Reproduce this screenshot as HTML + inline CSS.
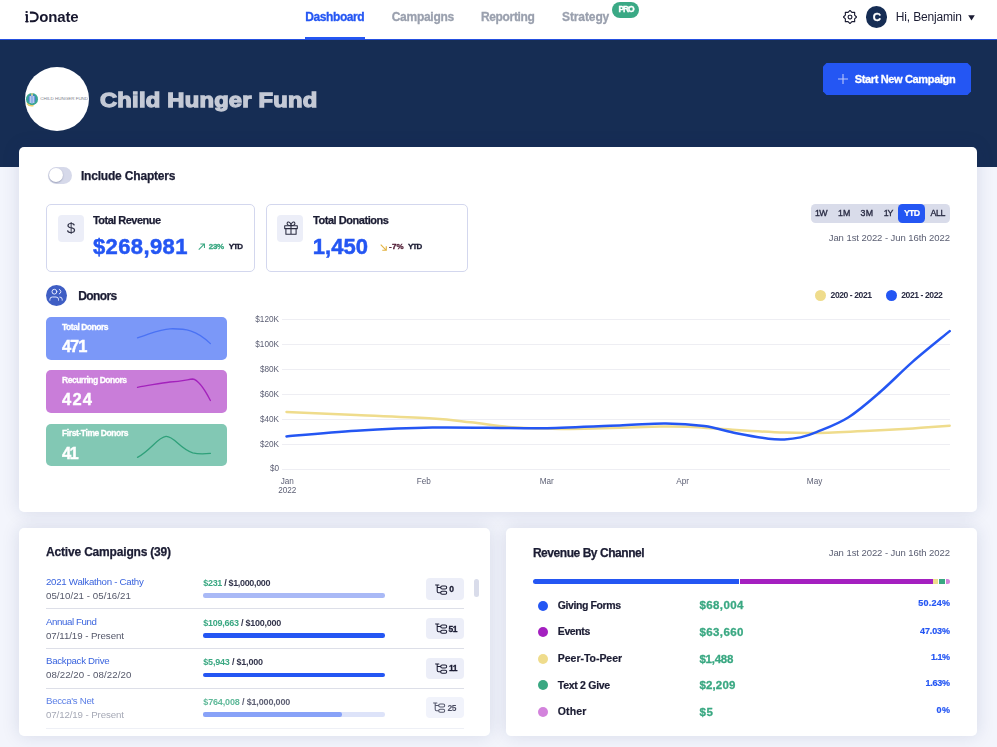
<!DOCTYPE html>
<html>
<head>
<meta charset="utf-8">
<title>iDonate Dashboard</title>
<style>
*{box-sizing:border-box;margin:0;padding:0}
html,body{width:997px;height:747px;overflow:hidden}
body{font-family:"Liberation Sans",sans-serif;background:#f3f5fc;position:relative;color:#1b1c33}
.a{position:absolute}
.t{position:absolute;white-space:pre;line-height:1}
.nav{left:0;top:0;width:997px;height:39px;background:#fff}
.navline{left:0;top:39px;width:997px;height:1px;background:#2550e0}
.hdr{left:0;top:40px;width:997px;height:127px;background:#162d54}
.card{background:#fff;border-radius:5px;box-shadow:0 0 18px rgba(22,40,100,0.13)}
.stat{border:1px solid #d3d7ee;border-radius:5px;background:#fff}
.ibox{background:#eceef8;border-radius:4px}
.dc{border-radius:5px}
.sep{height:1px;background:#dddfe8;left:46px;width:418px}
.bar{height:4.3px;border-radius:2.2px;left:203.2px;width:182px}
.badge{left:426px;width:38px;height:21.4px;border-radius:4px;background:#eceef8}
.dot{width:10px;height:10px;border-radius:50%}
</style>
</head>
<body>
<!-- NAV -->
<div class="a nav"></div>
<div class="a navline"></div>
<div class="a" style="left:305px;top:36.5px;width:60px;height:2.5px;background:#2456f3"></div>
<!-- logo iD -->
<svg class="a" style="left:24px;top:10px" width="16" height="14" viewBox="24 10 16 14" fill="none" stroke="#17172e"><ellipse cx="26.6" cy="12.1" rx="1.25" ry="1" fill="#17172e" stroke="none"/><path d="M26.9 14.2V22.3" stroke-width="2"/><path d="M25.2 14.9H27M25.2 21.6H28.6" stroke-width="1.3"/><path d="M29.9 12.6H32.9A4.8 4.3 0 0 1 32.9 21.2H29.9" stroke-width="2.1"/></svg>
<!-- PRO badge -->
<div class="a" style="left:612.2px;top:1.5px;width:27.1px;height:16.4px;border-radius:8.2px;background:#3aa985"></div>
<!-- gear -->
<svg class="a" style="left:843px;top:9.9px" width="14" height="14" viewBox="0 0 14 14" fill="none" stroke="#1b1c33" stroke-width="1.15" stroke-linejoin="round"><path d="M7.00 0.40L8.91 2.38L11.67 2.33L11.62 5.09L13.60 7.00L11.62 8.91L11.67 11.67L8.91 11.62L7.00 13.60L5.09 11.62L2.33 11.67L2.38 8.91L0.40 7.00L2.38 5.09L2.33 2.33L5.09 2.38Z"/><rect x="5.2" y="5.2" width="3.6" height="3.6" rx="1.2"/></svg>
<!-- avatar -->
<div class="a" style="left:865.7px;top:6px;width:21.6px;height:21.6px;border-radius:50%;background:#162d54"></div>
<!-- caret -->
<svg class="a" style="left:967.6px;top:14.5px" width="7" height="6" viewBox="0 0 7 6"><path d="M0.2 0.3h6.6L3.5 5.6z" fill="#1b1c33"/></svg>

<!-- HEADER -->
<div class="a hdr"></div>
<div class="a" style="left:25.3px;top:66.7px;width:64px;height:64px;border-radius:50%;background:#fff;overflow:hidden">
  <svg class="a" style="left:0;top:0" width="64" height="64" viewBox="0 0 64 64">
    <ellipse cx="7" cy="32.2" rx="6" ry="6.2" fill="#3aa694"/>
    <ellipse cx="7" cy="32" rx="3.6" ry="4.2" fill="#3f73d4"/>
    <path d="M2 36.5c1.5 2 4 2.6 6.5 2" stroke="#e6cf6a" stroke-width="1.3" fill="none"/>
    <rect x="6.3" y="26" width="1.4" height="3" fill="#e9d98a"/>
    <path d="M5.2 29v7M7 28.5v8M8.8 29v7" stroke="#fff" stroke-width="0.9"/>
    <text x="15.3" y="33.2" font-family="Liberation Sans, sans-serif" font-size="3.7" fill="#7d808c" textLength="47.8" lengthAdjust="spacingAndGlyphs">CHILD HUNGER FUND</text>
  </svg>
</div>
<div class="a" style="left:823px;top:63px;width:148px;height:32px;background:#2456f3;clip-path:polygon(3.5px 0,144.5px 0,148px 3.5px,148px 28.5px,144.5px 32px,3.5px 32px,0 28.5px,0 3.5px)"></div>
<svg class="a" style="left:838px;top:74px" width="10" height="10" viewBox="0 0 10 10" stroke="#b9c6fa" stroke-width="1.1" fill="none"><path d="M5 0v10M0 5h10"/></svg>

<!-- MAIN CARD -->
<div class="a card" style="left:19px;top:147px;width:958px;height:365px"></div>
<!-- toggle -->
<div class="a" style="left:48px;top:166.7px;width:24px;height:17px;border-radius:8.5px;background:#d6d9ea"></div>
<div class="a" style="left:48.8px;top:168px;width:14.2px;height:14.2px;border-radius:50%;background:#fff;box-shadow:0 0.8px 1.5px rgba(40,50,90,0.4)"></div>
<!-- stat cards -->
<div class="a stat" style="left:46px;top:204px;width:209px;height:67.5px"></div>
<div class="a stat" style="left:266px;top:204px;width:202px;height:67.5px"></div>
<div class="a ibox" style="left:58px;top:215px;width:26px;height:27px"></div>
<div class="a ibox" style="left:277.2px;top:215px;width:26px;height:27px"></div>
<!-- gift icon -->
<svg class="a" style="left:283.9px;top:221.2px" width="14" height="14" viewBox="0 0 14 14" fill="none" stroke="#2a2c40" stroke-width="1.05" stroke-linejoin="round"><rect x="0.7" y="4.7" width="12.6" height="2.9"/><path d="M1.9 7.6V13.3H12.1V7.6M7 4.7V13.3M7 4.7C5 4.7 3.1 3.9 3.1 2.5C3.1 1 4.6 0.5 5.6 1.4C6.5 2.2 7 3.6 7 4.7C7 3.6 7.5 2.2 8.4 1.4C9.4 0.5 10.9 1 10.9 2.5C10.9 3.9 9 4.7 7 4.7Z"/></svg>
<!-- arrows -->
<svg class="a" style="left:198.2px;top:243.2px" width="7.4" height="7.4" viewBox="0 0 8 8" fill="none" stroke="#3aa882" stroke-width="1.15"><path d="M0.8 7.2L7 1M2.5 1H7V5.5"/></svg>
<svg class="a" style="left:379.6px;top:243.6px" width="7.2" height="7.2" viewBox="0 0 8 8" fill="none" stroke="#e3b341" stroke-width="1.25"><path d="M0.8 0.8L7 7M2.5 7H7V2.5"/></svg>
<!-- range buttons -->
<div class="a" style="left:811px;top:204px;width:139px;height:18.8px;border-radius:4.5px;background:#d9dcea"></div>
<div class="a" style="left:898.2px;top:204px;width:27px;height:18.8px;border-radius:4.5px;background:#2456f3"></div>
<!-- donors icon -->
<div class="a" style="left:45.9px;top:285px;width:21.2px;height:21.2px;border-radius:50%;background:#3f5ec4"></div>
<svg class="a" style="left:48px;top:287px" width="16" height="16" viewBox="0 0 16 16" fill="none" stroke="#e4e9ff" stroke-width="1" stroke-linecap="round"><circle cx="6.4" cy="4.7" r="2.4"/><path d="M1.9 13.2V12.3Q1.9 10 4.4 10H8Q10.5 10 10.5 12.3V13.2"/><path d="M11.3 2.4A2.4 2.4 0 0 1 11.3 6.9M11.8 10Q14.2 10 14.2 12.3V13.2"/></svg>
<!-- legend dots -->
<div class="a" style="left:814.9px;top:290px;width:11.3px;height:11.3px;border-radius:50%;background:#efdc8c"></div>
<div class="a" style="left:885.6px;top:290px;width:11.3px;height:11.3px;border-radius:50%;background:#2456f3"></div>
<!-- donor cards -->
<div class="a dc" style="left:46px;top:317px;width:181px;height:43px;background:#7b98f8"></div>
<div class="a dc" style="left:46px;top:370px;width:181px;height:43px;background:#c97dd9"></div>
<div class="a dc" style="left:46px;top:423.5px;width:181px;height:42.5px;background:#82c8b4"></div>
<svg class="a" style="left:0;top:0" width="997" height="747" viewBox="0 0 997 747" fill="none" stroke-linecap="round" stroke-linejoin="round">
  <!-- sparklines -->
  <path d="M137.5 337.8C150 334 160 329 170 328.8C185 328.5 196 329.5 210.4 343.6" stroke="#4a72f4" stroke-width="1.3"/>
  <path d="M137.5 387.3C150 385.5 160 383 170 382C180 381.5 186 380 192.7 379C199 380 205 390 210.4 400.5" stroke="#a322bc" stroke-width="1.3"/>
  <path d="M137.5 457.3C150 451 158 437 166 436.4C174 436 180 449 192.7 452.8C199 454.5 205 454 210.4 453.4" stroke="#2fa07a" stroke-width="1.3"/>
  <!-- grid -->
  <g stroke="#eeeef3" stroke-width="1" stroke-linecap="butt">
    <path d="M282 319.5H950M282 344.5H950M282 369.5H950M282 394.5H950M282 419.5H950M282 444.5H950M282 469.5H950"/>
  </g>
  <!-- yellow line -->
  <path d="M286.5 412.0C298.1 412.5 331.9 414.0 356.2 415.1C380.5 416.2 413.4 417.3 432.5 418.5C451.6 419.7 457.9 420.9 470.6 422.3C483.3 423.7 496.0 425.8 508.7 426.9C521.4 427.9 534.3 428.3 547.0 428.6C559.7 428.9 566.2 429.2 585.0 428.8C603.8 428.4 642.8 426.8 660.0 426.5C677.2 426.2 675.3 426.2 688.0 426.8C700.7 427.4 720.2 429.0 736.3 430.0C752.4 431.0 770.5 432.1 784.4 432.6C798.3 433.1 806.3 433.2 819.7 432.9C833.1 432.6 849.2 431.8 864.7 431.0C880.2 430.2 898.6 429.3 912.8 428.4C927.0 427.5 943.6 426.2 949.7 425.8" stroke="#efdc8c" stroke-width="2.5"/>
  <!-- blue line -->
  <path d="M286.5 436.4C298.1 435.4 331.9 432.2 356.2 430.7C380.5 429.2 407.1 427.9 432.5 427.5C457.9 427.1 489.6 427.9 508.7 428.0C527.8 428.1 528.0 428.7 547.0 428.2C566.0 427.7 603.2 426.0 623.0 425.2C642.8 424.4 652.5 423.2 666.0 423.4C679.5 423.5 692.5 424.5 704.2 426.1C715.9 427.7 725.6 431.1 736.3 433.2C747.0 435.3 760.4 437.7 768.4 438.7C776.4 439.7 779.0 439.6 784.4 439.4C789.8 439.2 795.1 438.6 800.5 437.4C805.9 436.2 808.5 435.6 816.5 432.2C824.5 428.8 837.9 424.0 848.6 417.2C859.3 410.4 870.0 400.8 880.7 391.5C891.4 382.2 901.3 371.7 912.8 361.6C924.3 351.5 943.6 336.2 949.7 331.1" stroke="#2456f3" stroke-width="2.5"/>
</svg>

<!-- BOTTOM LEFT CARD -->
<div class="a card" style="left:19px;top:528px;width:471px;height:208px"></div>
<div class="a" style="left:474px;top:579px;width:4.5px;height:17.5px;border-radius:2.5px;background:#d9dcea"></div>
<!--ROWS-->
<div class="a sep" style="top:608px"></div>
<div class="a sep" style="top:648px"></div>
<div class="a sep" style="top:688px"></div>
<div class="a sep" style="top:727.5px;background:#eef0f6"></div>
<div class="a bar" style="top:593.4px;background:#a9b9f6"></div>
<div class="a bar" style="top:633.3px;background:#2456f3"></div>
<div class="a bar" style="top:673px;background:#2456f3"></div>
<div class="a bar" style="top:712.3px;background:#dde3f9"></div>
<div class="a bar" style="top:712.3px;width:139px;background:#88a2f8"></div>
<div class="a badge" style="top:578px;height:21.9px"></div>
<div class="a badge" style="top:617.8px"></div>
<div class="a badge" style="top:658px;height:21px"></div>
<div class="a badge" style="top:697px;height:20.6px;background:#f1f3fb"></div>
<svg width="0" height="0" style="position:absolute"><defs>
<g id="tree" fill="none" stroke-width="1.05" stroke-linecap="round" stroke-linejoin="round"><path d="M0.5 0.9h3.4M2.2 0.9v6.4q0 1.4 1.4 1.4h2M2.2 3.4h3.4"/><rect x="5.7" y="1.9" width="6" height="3" rx="1.5"/><rect x="5.7" y="7.2" width="6" height="3" rx="1.5"/></g>
</defs></svg>
<svg class="a" style="left:434.8px;top:583.5px" width="13" height="12" viewBox="0 0 13 12" stroke="#1b1c33"><use href="#tree"/></svg>
<svg class="a" style="left:434.5px;top:622.9px" width="13" height="12" viewBox="0 0 13 12" stroke="#1b1c33"><use href="#tree"/></svg>
<svg class="a" style="left:434.6px;top:662.5px" width="13" height="12" viewBox="0 0 13 12" stroke="#1b1c33"><use href="#tree"/></svg>
<svg class="a" style="left:432.9px;top:702.3px" width="13" height="12" viewBox="0 0 13 12" stroke="#55586c"><use href="#tree"/></svg>

<!-- BOTTOM RIGHT CARD -->
<div class="a card" style="left:506px;top:528px;width:471px;height:208px"></div>
<div class="a" style="left:533px;top:579px;width:206px;height:5px;border-radius:2.5px 0 0 2.5px;background:#2456f3"></div>
<div class="a" style="left:740px;top:579px;width:192.5px;height:5px;background:#a420c0"></div>
<div class="a" style="left:933.2px;top:579px;width:4.7px;height:5px;background:#efdc8c"></div>
<div class="a" style="left:938.7px;top:579px;width:6px;height:5px;background:#3aa882"></div>
<div class="a" style="left:946.2px;top:579px;width:3.8px;height:5px;border-radius:0 2.5px 2.5px 0;background:#d383dc"></div>
<div class="a dot" style="left:538px;top:600.7px;background:#2456f3"></div>
<div class="a dot" style="left:538px;top:626.7px;background:#a420c0"></div>
<div class="a dot" style="left:538px;top:653.7px;background:#efdc8c"></div>
<div class="a dot" style="left:538px;top:680.3px;background:#3aa882"></div>
<div class="a dot" style="left:538px;top:707.2px;background:#d383dc"></div>

<!-- TEXT -->
<div class="a" style="left:0;top:0;width:997px;height:747px;will-change:transform">
<div class="t" style="top:8.90px;font-size:15px;font-weight:700;color:#17172e;letter-spacing:-0.179px;left:39.3px;">onate</div>
<div class="t" style="top:11.00px;font-size:12px;font-weight:700;color:#2456f3;letter-spacing:-0.411px;left:305.3px;-webkit-text-stroke:0.3px #2456f3;">Dashboard</div>
<div class="t" style="top:11.00px;font-size:12px;font-weight:700;color:#9aa0ae;letter-spacing:-0.273px;left:391.7px;-webkit-text-stroke:0.3px #9aa0ae;">Campaigns</div>
<div class="t" style="top:11.00px;font-size:12px;font-weight:700;color:#9aa0ae;letter-spacing:-0.334px;left:480.9px;-webkit-text-stroke:0.3px #9aa0ae;">Reporting</div>
<div class="t" style="top:11.00px;font-size:12px;font-weight:700;color:#9aa0ae;letter-spacing:-0.104px;left:562px;-webkit-text-stroke:0.3px #9aa0ae;">Strategy</div>
<div class="t" style="top:5.35px;font-size:8.5px;font-weight:700;color:#ffffff;letter-spacing:-1.111px;left:626.0px;transform:translateX(-50%);-webkit-text-stroke:0.35px #fff;">PRO</div>
<div class="t" style="top:12.05px;font-size:11.5px;font-weight:700;color:#ffffff;left:876.8px;transform:translateX(-50%);-webkit-text-stroke:0.3px #fff;">C</div>
<div class="t" style="top:11.00px;font-size:12px;font-weight:400;color:#1b1c33;letter-spacing:-0.166px;left:895.8px;">Hi, Benjamin</div>
<div class="t" style="top:89.00px;font-size:21px;font-weight:700;color:#c5cad6;letter-spacing:0.207px;left:99.6px;-webkit-text-stroke:1.3px #c5cad6;transform:scaleX(1.13);transform-origin:left center;">Child Hunger Fund</div>
<div class="t" style="top:73.50px;font-size:11px;font-weight:700;color:#ffffff;letter-spacing:-0.351px;left:854.7px;-webkit-text-stroke:0.3px #fff;">Start New Campaign</div>
<div class="t" style="top:169.50px;font-size:12px;font-weight:700;color:#1b1c33;letter-spacing:-0.184px;left:80.9px;-webkit-text-stroke:0.25px #1b1c33;">Include Chapters</div>
<div class="t" style="top:219.65px;font-size:15.5px;font-weight:400;color:#33354a;left:71.1px;transform:translateX(-50%);">$</div>
<div class="t" style="top:214.80px;font-size:11px;font-weight:700;color:#1b1c33;letter-spacing:-0.531px;left:93px;-webkit-text-stroke:0.25px #1b1c33;">Total Revenue</div>
<div class="t" style="top:235.50px;font-size:22px;font-weight:700;color:#2456f3;letter-spacing:0.376px;left:93px;-webkit-text-stroke:0.5px #2456f3;">$268,981</div>
<div class="t" style="top:243.00px;font-size:8px;font-weight:700;color:#3aa882;letter-spacing:-0.308px;left:208.8px;-webkit-text-stroke:0.35px #3aa882;">23%</div>
<div class="t" style="top:243.00px;font-size:8px;font-weight:700;color:#1b1c33;letter-spacing:-0.850px;left:228.7px;-webkit-text-stroke:0.3px #1b1c33;">YTD</div>
<div class="t" style="top:214.80px;font-size:11px;font-weight:700;color:#1b1c33;letter-spacing:-0.450px;left:313px;-webkit-text-stroke:0.25px #1b1c33;">Total Donations</div>
<div class="t" style="top:235.50px;font-size:22px;font-weight:700;color:#2456f3;letter-spacing:0.059px;left:312.8px;-webkit-text-stroke:0.5px #2456f3;">1,450</div>
<div class="t" style="top:243.00px;font-size:8px;font-weight:700;color:#4f1a33;letter-spacing:0.233px;left:389px;-webkit-text-stroke:0.3px #4f1a33;">-7%</div>
<div class="t" style="top:243.00px;font-size:8px;font-weight:700;color:#1b1c33;letter-spacing:-0.850px;left:408px;-webkit-text-stroke:0.3px #1b1c33;">YTD</div>
<div class="t" style="top:290.00px;font-size:12px;font-weight:700;color:#1b1c33;letter-spacing:-0.600px;left:78.2px;-webkit-text-stroke:0.25px #1b1c33;">Donors</div>
<div class="t" style="top:208.80px;font-size:8.8px;font-weight:400;color:#2a2c44;letter-spacing:-0.603px;left:815.0px;-webkit-text-stroke:0.35px #2a2c44;">1W</div>
<div class="t" style="top:208.80px;font-size:8.8px;font-weight:400;color:#2a2c44;letter-spacing:0.266px;left:837.9px;-webkit-text-stroke:0.35px #2a2c44;">1M</div>
<div class="t" style="top:208.80px;font-size:8.8px;font-weight:400;color:#2a2c44;letter-spacing:0.566px;left:860.4000000000001px;-webkit-text-stroke:0.35px #2a2c44;">3M</div>
<div class="t" style="top:208.80px;font-size:8.8px;font-weight:400;color:#2a2c44;letter-spacing:-1.066px;left:883.6999999999999px;-webkit-text-stroke:0.35px #2a2c44;">1Y</div>
<div class="t" style="top:208.80px;font-size:8.8px;font-weight:400;color:#2a2c44;letter-spacing:-0.378px;left:930.5px;-webkit-text-stroke:0.35px #2a2c44;">ALL</div>
<div class="t" style="top:208.80px;font-size:8.8px;font-weight:700;color:#ffffff;letter-spacing:-0.805px;left:904px;-webkit-text-stroke:0.2px #fff;">YTD</div>
<div class="t" style="top:233.05px;font-size:9.5px;font-weight:400;color:#5a5e72;letter-spacing:-0.066px;right:47.07px;">Jan 1st 2022 - Jun 16th 2022</div>
<div class="t" style="top:291.10px;font-size:8.6px;font-weight:700;color:#2a2c44;letter-spacing:-0.448px;left:830.6px;">2020 - 2021</div>
<div class="t" style="top:291.10px;font-size:8.6px;font-weight:700;color:#2a2c44;letter-spacing:-0.427px;left:901.2px;">2021 - 2022</div>
<div class="t" style="top:323.05px;font-size:8.5px;font-weight:700;color:#fff;letter-spacing:-0.472px;left:62px;-webkit-text-stroke:0.3px #fff;">Total Donors</div>
<div class="t" style="top:338.25px;font-size:16.5px;font-weight:700;color:#fff;letter-spacing:-1.066px;left:62px;-webkit-text-stroke:0.4px #fff;">471</div>
<div class="t" style="top:376.05px;font-size:8.5px;font-weight:700;color:#fff;letter-spacing:-0.484px;left:62px;-webkit-text-stroke:0.3px #fff;">Recurring Donors</div>
<div class="t" style="top:391.25px;font-size:16.5px;font-weight:700;color:#fff;letter-spacing:1.234px;left:62px;-webkit-text-stroke:0.4px #fff;">424</div>
<div class="t" style="top:429.25px;font-size:8.5px;font-weight:700;color:#fff;letter-spacing:-0.409px;left:62px;-webkit-text-stroke:0.3px #fff;">First-Time Donors</div>
<div class="t" style="top:444.75px;font-size:16.5px;font-weight:700;color:#fff;letter-spacing:-1.659px;left:62px;-webkit-text-stroke:0.4px #fff;">41</div>
<div class="t" style="top:316.30px;font-size:8.2px;font-weight:400;color:#5c5f74;right:718.00px;">$120K</div>
<div class="t" style="top:341.30px;font-size:8.2px;font-weight:400;color:#5c5f74;right:718.00px;">$100K</div>
<div class="t" style="top:366.30px;font-size:8.2px;font-weight:400;color:#5c5f74;right:718.00px;">$80K</div>
<div class="t" style="top:391.30px;font-size:8.2px;font-weight:400;color:#5c5f74;right:718.00px;">$60K</div>
<div class="t" style="top:416.30px;font-size:8.2px;font-weight:400;color:#5c5f74;right:718.00px;">$40K</div>
<div class="t" style="top:441.30px;font-size:8.2px;font-weight:400;color:#5c5f74;right:718.00px;">$20K</div>
<div class="t" style="top:464.50px;font-size:8.2px;font-weight:400;color:#5c5f74;right:718.00px;">$0</div>
<div class="t" style="top:478.40px;font-size:8.2px;font-weight:400;color:#5c5f74;left:287.3px;transform:translateX(-50%);">Jan</div>
<div class="t" style="top:478.40px;font-size:8.2px;font-weight:400;color:#5c5f74;left:423.7px;transform:translateX(-50%);">Feb</div>
<div class="t" style="top:478.40px;font-size:8.2px;font-weight:400;color:#5c5f74;left:546.8px;transform:translateX(-50%);">Mar</div>
<div class="t" style="top:478.40px;font-size:8.2px;font-weight:400;color:#5c5f74;left:682.6px;transform:translateX(-50%);">Apr</div>
<div class="t" style="top:478.40px;font-size:8.2px;font-weight:400;color:#5c5f74;left:814.6px;transform:translateX(-50%);">May</div>
<div class="t" style="top:487.10px;font-size:8.2px;font-weight:400;color:#5c5f74;left:287.3px;transform:translateX(-50%);">2022</div>
<div class="t" style="top:545.80px;font-size:12px;font-weight:700;color:#1b1c33;letter-spacing:-0.186px;left:46.1px;-webkit-text-stroke:0.25px #1b1c33;">Active Campaigns (39)</div>
<div class="t" style="top:577.15px;font-size:9.7px;font-weight:400;color:#3a64de;letter-spacing:-0.275px;left:46px;">2021 Walkathon - Cathy</div>
<div class="t" style="top:590.85px;font-size:9.7px;font-weight:400;color:#55586a;letter-spacing:0.043px;left:46px;">05/10/21 - 05/16/21</div>
<div class="t" style="left:203.3px;top:578.50px;font-size:9px;font-weight:700;letter-spacing:-0.336px;color:#33354c"><span style="color:#3aa882">$231</span> / $1,000,000</div>
<div class="t" style="top:584.75px;font-size:8.5px;font-weight:700;color:#1b1c33;left:449.3px;-webkit-text-stroke:0.3px #1b1c33;">0</div>
<div class="t" style="top:617.05px;font-size:9.7px;font-weight:400;color:#3a64de;letter-spacing:-0.404px;left:46px;">Annual Fund</div>
<div class="t" style="top:630.85px;font-size:9.7px;font-weight:400;color:#55586a;letter-spacing:-0.058px;left:46px;">07/11/19 - Present</div>
<div class="t" style="left:203.3px;top:619.20px;font-size:9px;font-weight:700;letter-spacing:-0.254px;color:#33354c"><span style="color:#3aa882">$109,663</span> / $100,000</div>
<div class="t" style="top:624.75px;font-size:8.5px;font-weight:700;color:#1b1c33;letter-spacing:-0.669px;left:448.6px;-webkit-text-stroke:0.3px #1b1c33;">51</div>
<div class="t" style="top:656.05px;font-size:9.7px;font-weight:400;color:#3a64de;letter-spacing:-0.286px;left:46px;">Backpack Drive</div>
<div class="t" style="top:669.75px;font-size:9.7px;font-weight:400;color:#55586a;letter-spacing:0.070px;left:46px;">08/22/20 - 08/22/20</div>
<div class="t" style="left:203.3px;top:657.70px;font-size:9px;font-weight:700;letter-spacing:-0.204px;color:#33354c"><span style="color:#3aa882">$5,943</span> / $1,000</div>
<div class="t" style="top:663.75px;font-size:8.5px;font-weight:700;color:#1b1c33;letter-spacing:-0.600px;left:449.1px;-webkit-text-stroke:0.3px #1b1c33;">11</div>
<div class="t" style="top:695.75px;font-size:9.7px;font-weight:400;color:#5b7fe6;letter-spacing:-0.319px;left:46px;">Becca's Net</div>
<div class="t" style="top:710.05px;font-size:9.7px;font-weight:400;color:#a6a9b6;letter-spacing:-0.101px;left:46px;">07/12/19 - Present</div>
<div class="t" style="left:203.3px;top:698.20px;font-size:9px;font-weight:700;letter-spacing:-0.155px;color:#5e6074"><span style="color:#5fb999">$764,008</span> / $1,000,000</div>
<div class="t" style="top:703.75px;font-size:8.5px;font-weight:700;color:#4a4c62;letter-spacing:-0.669px;left:447.6px;">25</div>
<div class="t" style="top:546.60px;font-size:12px;font-weight:700;color:#1b1c33;letter-spacing:-0.451px;left:532.9px;-webkit-text-stroke:0.25px #1b1c33;">Revenue By Channel</div>
<div class="t" style="top:547.85px;font-size:9.5px;font-weight:400;color:#5a5e72;letter-spacing:-0.066px;right:47.07px;">Jan 1st 2022 - Jun 16th 2022</div>
<div class="t" style="top:599.95px;font-size:10.5px;font-weight:700;color:#1b1c33;letter-spacing:-0.399px;left:557.8px;-webkit-text-stroke:0.2px #1b1c33;">Giving Forms</div>
<div class="t" style="top:600.05px;font-size:11.5px;font-weight:700;color:#3aa882;letter-spacing:0.404px;left:699.4px;-webkit-text-stroke:0.3px #3aa882;">$68,004</div>
<div class="t" style="top:599.30px;font-size:9px;font-weight:700;color:#2456f3;letter-spacing:0.234px;right:46.77px;-webkit-text-stroke:0.2px #2456f3;">50.24%</div>
<div class="t" style="top:625.80px;font-size:10.5px;font-weight:700;color:#1b1c33;letter-spacing:-0.388px;left:557.8px;-webkit-text-stroke:0.2px #1b1c33;">Events</div>
<div class="t" style="top:627.30px;font-size:11.5px;font-weight:700;color:#3aa882;letter-spacing:0.404px;left:699.4px;-webkit-text-stroke:0.3px #3aa882;">$63,660</div>
<div class="t" style="top:626.50px;font-size:9px;font-weight:700;color:#2456f3;letter-spacing:-0.106px;right:47.11px;-webkit-text-stroke:0.2px #2456f3;">47.03%</div>
<div class="t" style="top:653.05px;font-size:10.5px;font-weight:700;color:#1b1c33;letter-spacing:-0.027px;left:557.8px;-webkit-text-stroke:0.2px #1b1c33;">Peer-To-Peer</div>
<div class="t" style="top:653.85px;font-size:11.5px;font-weight:700;color:#3aa882;letter-spacing:-0.237px;left:699.4px;-webkit-text-stroke:0.3px #3aa882;">$1,488</div>
<div class="t" style="top:653.40px;font-size:9px;font-weight:700;color:#2456f3;letter-spacing:-0.505px;right:47.51px;-webkit-text-stroke:0.2px #2456f3;">1.1%</div>
<div class="t" style="top:679.60px;font-size:10.5px;font-weight:700;color:#1b1c33;letter-spacing:-0.285px;left:557.8px;-webkit-text-stroke:0.2px #1b1c33;">Text 2 Give</div>
<div class="t" style="top:680.40px;font-size:11.5px;font-weight:700;color:#3aa882;letter-spacing:0.163px;left:699.4px;-webkit-text-stroke:0.3px #3aa882;">$2,209</div>
<div class="t" style="top:679.10px;font-size:9px;font-weight:700;color:#2456f3;letter-spacing:-0.233px;right:47.23px;-webkit-text-stroke:0.2px #2456f3;">1.63%</div>
<div class="t" style="top:706.15px;font-size:10.5px;font-weight:700;color:#1b1c33;letter-spacing:0.121px;left:557.8px;-webkit-text-stroke:0.2px #1b1c33;">Other</div>
<div class="t" style="top:706.95px;font-size:11.5px;font-weight:700;color:#3aa882;letter-spacing:0.703px;left:699.4px;-webkit-text-stroke:0.3px #3aa882;">$5</div>
<div class="t" style="top:706.10px;font-size:9px;font-weight:700;color:#2456f3;letter-spacing:0.384px;right:46.62px;-webkit-text-stroke:0.2px #2456f3;">0%</div>
</div>
</body>
</html>
